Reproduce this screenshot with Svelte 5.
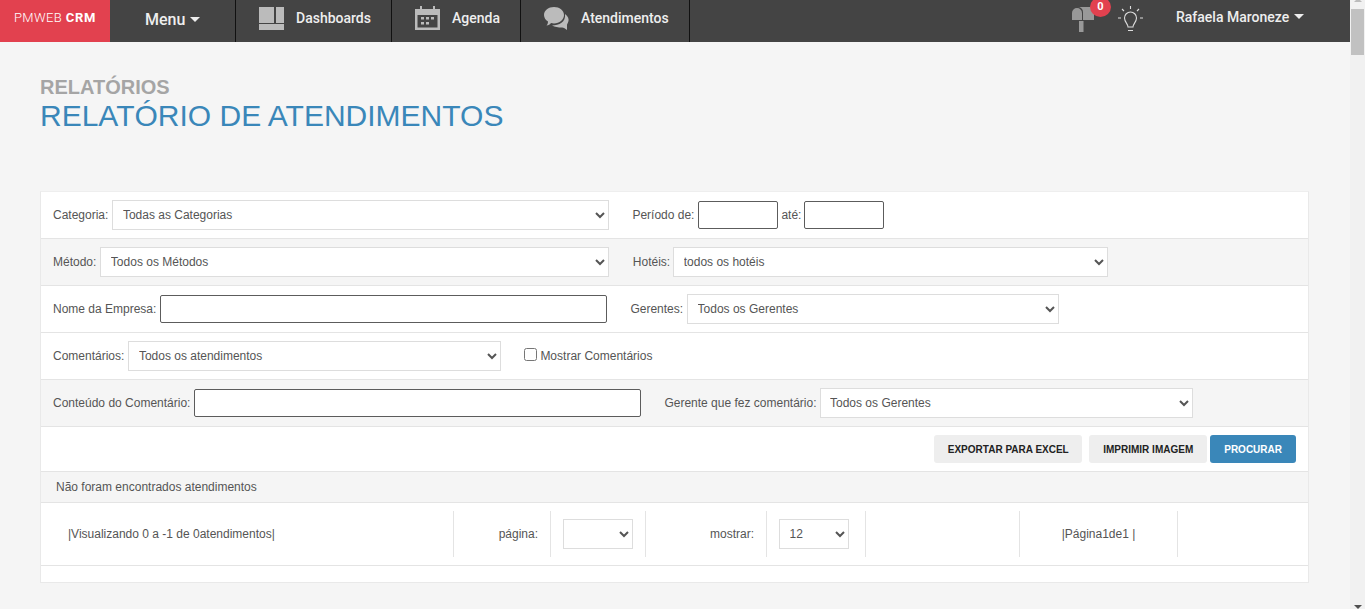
<script>
  let rows = ["12", "24", "48"];
</script>

<div class="page">
  <nav class="topbar">
    <div class="brand">PMWEB <b>CRM</b></div>
    <div class="menu">Menu <span class="caret"></span></div>
    <a class="navitem dash">
      <svg width="25" height="23" viewBox="0 0 25 23"><path d="M0 0h15v16H0zM17 0h8v16h-8zM0 17h25v6H0z" fill="#bbb"/></svg>
      Dashboards
    </a>
    <a class="navitem agenda">
      <svg width="25" height="24" viewBox="0 0 25 24" fill="#bbb"><path d="M0 3h25v21H0zM2.500 9v12.500h20V9z" fill-rule="evenodd"/><path d="M5 0h2v5H5zM18 0h2v5h-2zM6 11h3v2.500H6zM11 11h3v2.500h-3zM16 11h3v2.500h-3zM6 16h3v2.500H6zM11 16h3v2.500h-3z"/></svg>
      Agenda
    </a>
    <a class="navitem talk">
      <svg width="25" height="23" viewBox="0 0 25 23" fill="#bbb"><path d="M21 7c3 2 4 5 3.500 7-.5 2-1.500 3-1.500 4v5c-2-1.500-3-2.500-5-2.500-4 0-7-.5-10-2 7 0 14-3.500 13-11.500z"/><path d="M10 0c5.500 0 10 3.500 10 8s-4.500 8.500-10 8.500c-1 0-2-.1-3-.4C6 17.500 4.500 18.500 2.500 18.500c1-1 1.500-2.500 1.500-4C1.500 13 0 10.500 0 8 0 3.500 4.500 0 10 0z"/></svg>
      Atendimentos
    </a>
    <div class="spacer"></div>
    <div class="tools">
      <span class="mailbox">
        <svg width="26" height="30" viewBox="0 0 26 30" fill="#999"><path d="M7 5h16v13H12v-8a5 5 0 0 0-5-5z"/><path d="M6 6a5 5 0 0 1 5 5v7H1v-7a5 5 0 0 1 5-5zM8 19h4.500v11H8z"/></svg>
        <span class="badge">0</span>
      </span>
      <svg class="bulb" width="25" height="26" viewBox="0 0 25 26" fill="none" stroke="#ddd" stroke-width="1.100"><path d="M10 21c0-3-3.500-5-3.500-9a6 6 0 0 1 12 0c0 4-3.500 6-3.500 9zM10 24.500h5M12.500 0v3M4 3l2 2M21 3l-2 2M0 12h3M22 12h3"/></svg>
    </div>
    <div class="user">Rafaela Maroneze <span class="caret small"></span></div>
  </nav>

  <header class="heading">
    <h2>RELATÓRIOS</h2>
    <h1>RELATÓRIO DE ATENDIMENTOS</h1>
  </header>

  <section class="card">
    <div class="row">
      <label class="field">Categoria:
        <select class="w497"><option>Todas as Categorias</option></select>
      </label>
      <label class="field second">Período de:
        <input class="date" type="text" />
      </label>
      <label class="field until">até:
        <input class="date" type="text" />
      </label>
    </div>
    <div class="row alt">
      <label class="field">Método:
        <select class="w509"><option>Todos os Métodos</option></select>
      </label>
      <label class="field second tight">Hotéis:
        <select class="w435"><option>todos os hotéis</option></select>
      </label>
    </div>
    <div class="row">
      <label class="field">Nome da Empresa:
        <input class="w447" type="text" />
      </label>
      <label class="field second">Gerentes:
        <select class="w372"><option>Todos os Gerentes</option></select>
      </label>
    </div>
    <div class="row">
      <label class="field">Comentários:
        <select class="w373"><option>Todos os atendimentos</option></select>
      </label>
      <label class="check"><input type="checkbox" /> Mostrar Comentários</label>
    </div>
    <div class="row alt">
      <label class="field">Conteúdo do Comentário:
        <input class="w447" type="text" />
      </label>
      <label class="field second narrow">Gerente que fez comentário:
        <select class="w373"><option>Todos os Gerentes</option></select>
      </label>
    </div>
    <div class="actions">
      <button class="btn">EXPORTAR PARA EXCEL</button>
      <button class="btn">IMPRIMIR IMAGEM</button>
      <button class="btn primary">PROCURAR</button>
    </div>
    <div class="notice">Não foram encontrados atendimentos</div>
    <div class="pager">
      <div class="cell info">|Visualizando 0 a -1 de 0atendimentos|</div>
      <div class="cell lbl page-lbl">página:</div>
      <div class="cell sel page-sel"><select class="mini"></select></div>
      <div class="cell lbl show-lbl">mostrar:</div>
      <div class="cell sel show-sel">
        <select class="mini">{#each rows as r}<option>{r}</option>{/each}</select>
      </div>
      <div class="cell blank"></div>
      <div class="cell pages">|Página1de1 |</div>
      <div class="cell last"></div>
    </div>
    <div class="foot"></div>
  </section>

  <div class="scrollbar">
    <span class="arrow up"></span>
    <span class="thumb"></span>
    <span class="arrow down"></span>
  </div>
</div>

<style>
  :global(body) {
    margin: 0;
    background: #f5f5f5;
    font-family: "Liberation Sans", Arial, sans-serif;
    overflow: hidden;
  }
  .page {
    position: relative;
    width: 1365px;
    height: 609px;
    padding-right: 15px;
    box-sizing: border-box;
    overflow: hidden;
  }
  .topbar {
    display: flex;
    height: 42px;
    background: #444;
    color: #eee;
    font-family: Roboto, sans-serif;
    align-items: stretch;
  }
  .brand {
    width: 110px;
    background: #e2414f;
    color: #fff;
    font-size: 13px;
    font-weight: 300;
    line-height: 36px;
    text-align: center;
    letter-spacing: .4px;
    box-sizing: border-box;
  }
  .brand b { font-weight: 700; letter-spacing: .7px; }
  .menu {
    width: 126px;
    box-sizing: border-box;
    padding-left: 35px;
    font-size: 16px;
    font-weight: 500;
    line-height: 40px;
    border-right: 1px solid #111;
  }
  .caret {
    display: inline-block;
    border: 5px solid transparent;
    border-top-color: #eee;
    border-bottom: 0;
    vertical-align: 3px;
    margin-left: 1px;
  }
  .navitem {
    display: flex;
    align-items: center;
    gap: 12px;
    padding-left: 23px;
    padding-bottom: 6px;
    box-sizing: border-box;
    font-size: 14px;
    font-weight: 500;
    border-right: 1px solid #111;
  }
  .dash { width: 156px; }
  .agenda { width: 129px; }
  .talk { width: 169px; }
  .spacer { flex: 1; }
  .tools { display: flex; width: 105px; }
  .mailbox { position: relative; width: 47px; padding-top: 2px; }
  .badge {
    position: absolute;
    left: 19px;
    top: -3px;
    width: 21px;
    height: 20px;
    border-radius: 50%;
    background: #e2414f;
    color: #fff;
    font-size: 11px;
    font-weight: 700;
    line-height: 20px;
    text-align: center;
  }
  .bulb { margin-top: 6px; }
  .user {
    width: 174px;
    font-size: 14px;
    font-weight: 500;
    line-height: 35px;
    white-space: nowrap;
  }
  .heading {
    padding: 33px 40px 0;
    height: 116px;
    box-sizing: border-box;
  }
  .heading h2 {
    margin: 0;
    font-size: 20px;
    line-height: 24px;
    color: #a5a5a5;
    font-weight: 700;
  }
  .heading h1 {
    margin: 0;
    font-size: 30px;
    line-height: 34px;
    font-weight: 400;
    color: #3a87b9;
  }
  .card {
    margin: 33px 41px 0 40px;
    background: #fff;
    border: 1px solid #e9e9e9;
    border-top-color: #eee;
    box-sizing: border-box;
    font-size: 12px;
    color: #555;
  }
  .row {
    display: flex;
    align-items: center;
    height: 47px;
    padding-left: 12px;
    box-sizing: border-box;
    border-bottom: 1px solid #e4e4e4;
  }
  .row.alt { background: #f5f5f5; }
  .field { display: flex; align-items: center; gap: 4px; white-space: nowrap; }
  .second { margin-left: 23px; }
  .until { margin-left: 3px; gap: 3px; }
  .tight { gap: 3px; margin-left: 24px; }
  .narrow { gap: 3px; }
  .check { display: flex; align-items: center; margin-left: 23px; }
  .check input { margin: 0 3px 3px 0; width: 13px; height: 13px; }
  select {
    height: 30px;
    border: 1px solid #ddd;
    background: #fff;
    color: #555;
    font: 12px "Liberation Sans", Arial, sans-serif;
    padding: 0 5.5px;
    box-sizing: border-box;
    border-radius: 0;
  }
  input[type="text"] {
    height: 28px;
    border: 1px solid #5c5c5c;
    border-radius: 2px;
    box-sizing: border-box;
    background: #fff;
  }
  .date { width: 80px; }
  .w497 { width: 497px; }
  .w509 { width: 508.500px; }
  .w435 { width: 435px; }
  .w447 { width: 447px; }
  .w372 { width: 372px; }
  .w373 { width: 373px; }
  .actions {
    display: flex;
    justify-content: flex-end;
    align-items: center;
    height: 45px;
    padding-right: 12px;
    box-sizing: border-box;
    border-bottom: 1px solid #e4e4e4;
  }
  .btn {
    height: 28px;
    border: 0;
    border-radius: 3px;
    background: #eee;
    color: #222;
    font: 700 10px "Liberation Sans", Arial, sans-serif;
    padding: 0 14px;
    margin-left: 7px;
  }
  .btn:first-child { padding: 0 13.500px; }
  .btn + .btn + .btn { margin-left: 3px; }
  .primary { background: #3a87b9; color: #fff; }
  .notice {
    height: 31px;
    line-height: 30px;
    padding-left: 15px;
    box-sizing: border-box;
    background: #f5f5f5;
    border-bottom: 1px solid #e4e4e4;
  }
  .pager {
    display: grid;
    grid-template-columns: 413px 97px 95px 121px 99px 154px 158px 1fr;
    height: 63px;
    padding: 8px 0;
    box-sizing: border-box;
    border-bottom: 1px solid #e4e4e4;
  }
  .cell {
    display: flex;
    align-items: center;
    border-right: 1px solid #e4e4e4;
    box-sizing: border-box;
  }
  .info { padding-left: 27px; }
  .lbl { justify-content: flex-end; padding-right: 12px; }
  .sel { padding-left: 12px; }
  .pages { justify-content: center; }
  .last { border-right: 0; }
  .mini { width: 70px; }
  .foot { height: 16px; }
  .scrollbar {
    position: absolute;
    top: 0;
    right: 0;
    width: 15px;
    height: 609px;
    background: #f1f1f1;
  }
  .thumb {
    position: absolute;
    left: 1px;
    top: 9px;
    width: 13px;
    height: 46px;
    background: #c1c1c1;
  }
  .arrow {
    position: absolute;
    left: 4px;
    border: 4px solid transparent;
  }
  .arrow.up { top: -2px; border-top: 0; border-bottom-color: #bbb; }
  .arrow.down { bottom: 0; border-bottom: 0; border-top-color: #505050; }
</style>
